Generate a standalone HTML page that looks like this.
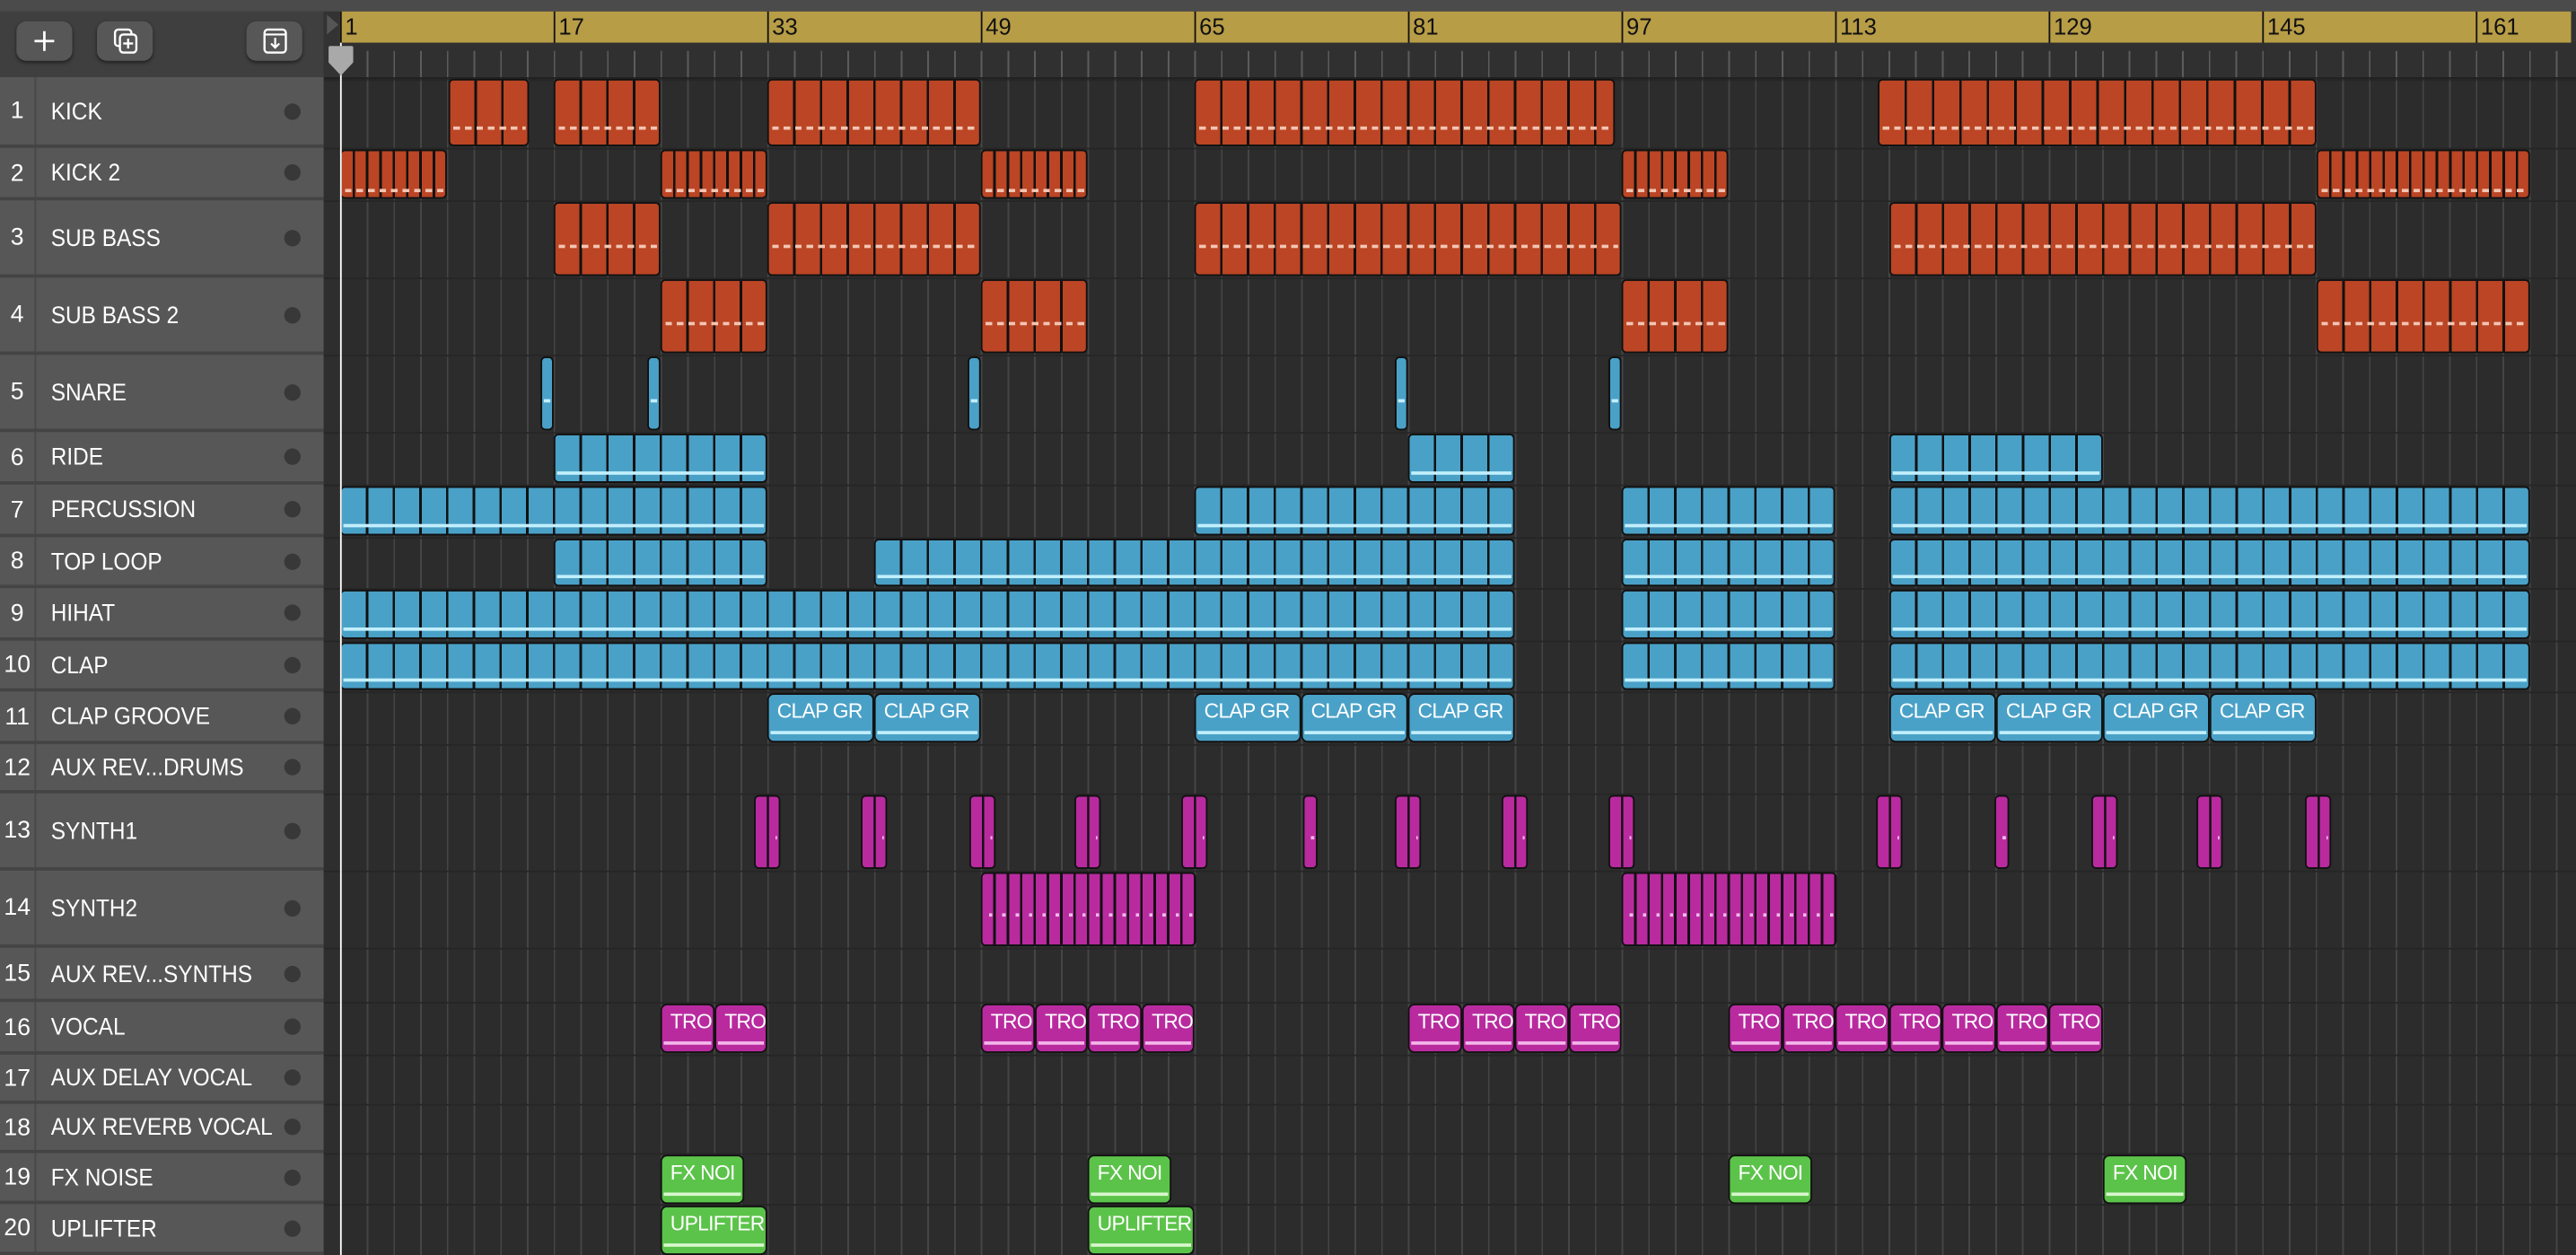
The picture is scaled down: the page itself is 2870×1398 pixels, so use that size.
<!DOCTYPE html>
<html><head><meta charset="utf-8"><style>
html,body{margin:0;padding:0;background:#2c2c2c;overflow:hidden;}
body{width:2870px;height:1398px;}
#w{position:absolute;left:0;top:0;width:1568px;height:764px;transform:scale(1.83036,1.8298);transform-origin:0 0;font-family:"Liberation Sans",sans-serif;background:#2c2c2c;overflow:hidden;}
.a{position:absolute;}
.r{position:absolute;border:1px solid #111;border-radius:3px;box-sizing:border-box;background:repeating-linear-gradient(90deg,var(--c) 0 calc(var(--w) - 1.5px),#111 calc(var(--w) - 1.5px) var(--w));}
.r::after{content:"";position:absolute;left:1px;right:1px;bottom:var(--lb);height:1.6px;background:var(--l);}
.o{--c:#bb4524;--l:repeating-linear-gradient(90deg,transparent 0 1px,#f3c5b3 1px 5px,transparent 5px 7px);}
.b{--c:#4aa1c7;--l:#c2effd;}
.m{--c:#b92a9f;--l:repeating-linear-gradient(90deg,transparent 0 3px,#f4b7ea 3px 5px,transparent 5px 8.125px);}
.mt{--c:#b92a9f;--l:repeating-linear-gradient(90deg,transparent 0 11px,#f4b7ea 11px 13px,transparent 13px 16.25px);}
.lc{position:absolute;box-sizing:border-box;border:1px solid #111;border-radius:4px;color:#fff;font-size:12.5px;letter-spacing:-0.4px;padding:3px 0 0 5px;white-space:nowrap;overflow:hidden;}
.lc::after{content:"";position:absolute;left:1px;right:1px;bottom:4px;height:1.6px;background:var(--l);}
.lb{background:#4aa1c7;--l:#c2effd;}
.lm{background:#b92a9f;--l:#f4b7ea;height:30px;}
.lg{background:#5cc34a;--l:#d9f7cf;}
.tr{position:absolute;left:0;width:197px;background:#575757;box-sizing:border-box;border-bottom:2px solid #444;color:#fff;font-size:14.5px;}
.tr .n{position:absolute;left:0;width:22px;text-align:center;border-right:1px solid #474747;height:100%;display:flex;align-items:center;justify-content:center;box-sizing:border-box;padding-top:1px;}
.tr .t{position:absolute;left:31px;top:50%;transform:translateY(-45%) scaleX(0.92);transform-origin:left center;white-space:nowrap;}
.tr .d{position:absolute;left:173px;top:50%;margin-top:-5px;width:10px;height:10px;border-radius:50%;background:#383838;}
.hl{position:absolute;left:197px;width:1371px;height:1.5px;background:#262626;}
.btn{position:absolute;top:13px;height:24px;width:34px;border-radius:6px;background:#575757;box-shadow:0 1px 2px #222;}
.num{position:absolute;top:7px;height:19px;border-left:1px solid #111;font-size:14px;color:#111;padding-left:2px;line-height:19px;}
</style></head><body><div id="w">
<div class="a" style="left:0;top:0;width:1568px;height:7px;background:#4b4b4b"></div>
<div class="a" style="left:0;top:7px;width:197px;height:40px;background:#3f3f3f"></div>
<div class="btn" style="left:10px"><svg width="34" height="24" viewBox="0 0 34 24"><path d="M17 6v12M11 12h12" stroke="#fff" stroke-width="1.5"/></svg></div>
<div class="btn" style="left:59px"><svg width="34" height="24" viewBox="0 0 34 24"><rect x="11" y="5" width="10" height="10" rx="2" fill="none" stroke="#fff" stroke-width="1.3"/><rect x="14" y="8" width="10" height="11" rx="2" fill="#575757" stroke="#fff" stroke-width="1.3"/><path d="M19 10.5v6M16 13.5h6" stroke="#fff" stroke-width="1.3"/></svg></div>
<div class="btn" style="left:150px"><svg width="34" height="24" viewBox="0 0 34 24"><rect x="11" y="5" width="13" height="14" rx="2" fill="none" stroke="#fff" stroke-width="1.3"/><path d="M11 8h13M17.5 10v6M15 13.5l2.5 2.5 2.5-2.5" stroke="#fff" stroke-width="1.2" fill="none"/></svg></div>
<div class="a" style="left:197px;top:7px;width:10px;height:40px;background:#333"></div>
<svg class="a" style="left:198px;top:8px" width="9" height="14"><path d="M1 1L8 7L1 13Z" fill="#555"/></svg>
<div class="a" style="left:207px;top:7px;width:1358px;height:19px;background:#b89d47"></div>
<div class="a" style="left:207px;top:26px;width:1361px;height:21px;background:#303030"></div>
<div class="a" style="left:207px;top:31px;width:1361px;height:16px;background:repeating-linear-gradient(90deg,#5c5c5c 0 1px,transparent 1px 16.25px)"></div>
<div class="num" style="left:207px">1</div>
<div class="num" style="left:337px">17</div>
<div class="num" style="left:467px">33</div>
<div class="num" style="left:597px">49</div>
<div class="num" style="left:727px">65</div>
<div class="num" style="left:857px">81</div>
<div class="num" style="left:987px">97</div>
<div class="num" style="left:1117px">113</div>
<div class="num" style="left:1247px">129</div>
<div class="num" style="left:1377px">145</div>
<div class="num" style="left:1507px">161</div>
<div class="a" style="left:1565px;top:7px;width:3px;height:19px;background:#333"></div>
<div class="a" style="left:197px;top:47px;width:10px;height:717px;background:#2e2e2e"></div>
<div class="a" style="left:207px;top:47px;width:1361px;height:717px;background:repeating-linear-gradient(90deg,#454545 0 1px,transparent 1px 16.25px) #2c2c2c"></div>
<div class="a" style="left:197px;top:47px;width:1371px;height:3px;background:linear-gradient(#1f1f1f,transparent)"></div>
<div class="hl" style="top:89.5px"></div><div class="hl" style="top:121.5px"></div><div class="hl" style="top:168.5px"></div><div class="hl" style="top:215.5px"></div><div class="hl" style="top:262.5px"></div><div class="hl" style="top:294.5px"></div><div class="hl" style="top:326.5px"></div><div class="hl" style="top:357.5px"></div><div class="hl" style="top:389.5px"></div><div class="hl" style="top:420.5px"></div><div class="hl" style="top:452.5px"></div><div class="hl" style="top:482.5px"></div><div class="hl" style="top:529.5px"></div><div class="hl" style="top:576.5px"></div><div class="hl" style="top:609.5px"></div><div class="hl" style="top:641.5px"></div><div class="hl" style="top:671.5px"></div><div class="hl" style="top:701.5px"></div><div class="hl" style="top:732.5px"></div>

<div class="tr" style="top:47px;height:43px"><div class="n">1</div><div class="t">KICK</div><div class="d"></div></div>
<div class="tr" style="top:90px;height:32px"><div class="n">2</div><div class="t">KICK 2</div><div class="d"></div></div>
<div class="tr" style="top:122px;height:47px"><div class="n">3</div><div class="t">SUB BASS</div><div class="d"></div></div>
<div class="tr" style="top:169px;height:47px"><div class="n">4</div><div class="t">SUB BASS 2</div><div class="d"></div></div>
<div class="tr" style="top:216px;height:47px"><div class="n">5</div><div class="t">SNARE</div><div class="d"></div></div>
<div class="tr" style="top:263px;height:32px"><div class="n">6</div><div class="t">RIDE</div><div class="d"></div></div>
<div class="tr" style="top:295px;height:32px"><div class="n">7</div><div class="t">PERCUSSION</div><div class="d"></div></div>
<div class="tr" style="top:327px;height:31px"><div class="n">8</div><div class="t">TOP LOOP</div><div class="d"></div></div>
<div class="tr" style="top:358px;height:32px"><div class="n">9</div><div class="t">HIHAT</div><div class="d"></div></div>
<div class="tr" style="top:390px;height:31px"><div class="n">10</div><div class="t">CLAP</div><div class="d"></div></div>
<div class="tr" style="top:421px;height:32px"><div class="n">11</div><div class="t">CLAP GROOVE</div><div class="d"></div></div>
<div class="tr" style="top:453px;height:30px"><div class="n">12</div><div class="t">AUX REV...DRUMS</div><div class="d"></div></div>
<div class="tr" style="top:483px;height:47px"><div class="n">13</div><div class="t">SYNTH1</div><div class="d"></div></div>
<div class="tr" style="top:530px;height:47px"><div class="n">14</div><div class="t">SYNTH2</div><div class="d"></div></div>
<div class="tr" style="top:577px;height:33px"><div class="n">15</div><div class="t">AUX REV...SYNTHS</div><div class="d"></div></div>
<div class="tr" style="top:610px;height:32px"><div class="n">16</div><div class="t">VOCAL</div><div class="d"></div></div>
<div class="tr" style="top:642px;height:30px"><div class="n">17</div><div class="t">AUX DELAY VOCAL</div><div class="d"></div></div>
<div class="tr" style="top:672px;height:30px"><div class="n">18</div><div class="t">AUX REVERB VOCAL</div><div class="d"></div></div>
<div class="tr" style="top:702px;height:31px"><div class="n">19</div><div class="t">FX NOISE</div><div class="d"></div></div>
<div class="tr" style="top:733px;height:31px"><div class="n">20</div><div class="t">UPLIFTER</div><div class="d"></div></div>

<div class="r o" style="left:273px;top:48px;width:49px;height:41px;--w:16.25px;--lb:9px"></div>
<div class="r o" style="left:337px;top:48px;width:65px;height:41px;--w:16.25px;--lb:9px"></div>
<div class="r o" style="left:467px;top:48px;width:130px;height:41px;--w:16.25px;--lb:9px"></div>
<div class="r o" style="left:727px;top:48px;width:256px;height:41px;--w:16.25px;--lb:9px"></div>
<div class="r o" style="left:1143px;top:48px;width:267px;height:41px;--w:16.7px;--lb:9px"></div>
<div class="r o" style="left:207px;top:91px;width:65px;height:30px;--w:8.125px;--lb:3px"></div>
<div class="r o" style="left:402px;top:91px;width:65px;height:30px;--w:8.125px;--lb:3px"></div>
<div class="r o" style="left:597px;top:91px;width:65px;height:30px;--w:8.125px;--lb:3px"></div>
<div class="r o" style="left:987px;top:91px;width:65px;height:30px;--w:8.125px;--lb:3px"></div>
<div class="r o" style="left:1410px;top:91px;width:130px;height:30px;--w:8.125px;--lb:3px"></div>
<div class="r o" style="left:337px;top:123px;width:65px;height:45px;--w:16.25px;--lb:16px"></div>
<div class="r o" style="left:467px;top:123px;width:130px;height:45px;--w:16.25px;--lb:16px"></div>
<div class="r o" style="left:727px;top:123px;width:260px;height:45px;--w:16.25px;--lb:16px"></div>
<div class="r o" style="left:1150px;top:123px;width:260px;height:45px;--w:16.25px;--lb:16px"></div>
<div class="r o" style="left:402px;top:170px;width:65px;height:45px;--w:16.25px;--lb:16px"></div>
<div class="r o" style="left:597px;top:170px;width:65px;height:45px;--w:16.25px;--lb:16px"></div>
<div class="r o" style="left:987px;top:170px;width:65px;height:45px;--w:16.25px;--lb:16px"></div>
<div class="r o" style="left:1410px;top:170px;width:130px;height:45px;--w:16.25px;--lb:16px"></div>
<div class="r b" style="left:329px;top:217px;width:8px;height:45px;--w:8px;--lb:16px"></div>
<div class="r b" style="left:394px;top:217px;width:8px;height:45px;--w:8px;--lb:16px"></div>
<div class="r b" style="left:589px;top:217px;width:8px;height:45px;--w:8px;--lb:16px"></div>
<div class="r b" style="left:849px;top:217px;width:8px;height:45px;--w:8px;--lb:16px"></div>
<div class="r b" style="left:979px;top:217px;width:8px;height:45px;--w:8px;--lb:16px"></div>
<div class="r b" style="left:337px;top:264px;width:130px;height:30px;--w:16.25px;--lb:4px"></div>
<div class="r b" style="left:857px;top:264px;width:65px;height:30px;--w:16.25px;--lb:4px"></div>
<div class="r b" style="left:1150px;top:264px;width:130px;height:30px;--w:16.25px;--lb:4px"></div>
<div class="r b" style="left:207px;top:296px;width:260px;height:30px;--w:16.25px;--lb:4px"></div>
<div class="r b" style="left:727px;top:296px;width:195px;height:30px;--w:16.25px;--lb:4px"></div>
<div class="r b" style="left:987px;top:296px;width:130px;height:30px;--w:16.25px;--lb:4px"></div>
<div class="r b" style="left:1150px;top:296px;width:390px;height:30px;--w:16.25px;--lb:4px"></div>
<div class="r b" style="left:337px;top:328px;width:130px;height:29px;--w:16.25px;--lb:4px"></div>
<div class="r b" style="left:532px;top:328px;width:390px;height:29px;--w:16.25px;--lb:4px"></div>
<div class="r b" style="left:987px;top:328px;width:130px;height:29px;--w:16.25px;--lb:4px"></div>
<div class="r b" style="left:1150px;top:328px;width:390px;height:29px;--w:16.25px;--lb:4px"></div>
<div class="r b" style="left:207px;top:359px;width:715px;height:30px;--w:16.25px;--lb:4px"></div>
<div class="r b" style="left:987px;top:359px;width:130px;height:30px;--w:16.25px;--lb:4px"></div>
<div class="r b" style="left:1150px;top:359px;width:390px;height:30px;--w:16.25px;--lb:4px"></div>
<div class="r b" style="left:207px;top:391px;width:715px;height:29px;--w:16.25px;--lb:4px"></div>
<div class="r b" style="left:987px;top:391px;width:130px;height:29px;--w:16.25px;--lb:4px"></div>
<div class="r b" style="left:1150px;top:391px;width:390px;height:29px;--w:16.25px;--lb:4px"></div>
<div class="lc lb" style="left:467px;top:422px;width:65px;height:30px">CLAP GR</div>
<div class="lc lb" style="left:532px;top:422px;width:65px;height:30px">CLAP GR</div>
<div class="lc lb" style="left:727px;top:422px;width:65px;height:30px">CLAP GR</div>
<div class="lc lb" style="left:792px;top:422px;width:65px;height:30px">CLAP GR</div>
<div class="lc lb" style="left:857px;top:422px;width:65px;height:30px">CLAP GR</div>
<div class="lc lb" style="left:1150px;top:422px;width:65px;height:30px">CLAP GR</div>
<div class="lc lb" style="left:1215px;top:422px;width:65px;height:30px">CLAP GR</div>
<div class="lc lb" style="left:1280px;top:422px;width:65px;height:30px">CLAP GR</div>
<div class="lc lb" style="left:1345px;top:422px;width:65px;height:30px">CLAP GR</div>
<div class="r mt" style="left:459px;top:484px;width:16.25px;height:45px;--w:8.125px;--lb:17px"></div>
<div class="r mt" style="left:524px;top:484px;width:16.25px;height:45px;--w:8.125px;--lb:17px"></div>
<div class="r mt" style="left:590px;top:484px;width:16.25px;height:45px;--w:8.125px;--lb:17px"></div>
<div class="r mt" style="left:654px;top:484px;width:16.25px;height:45px;--w:8.125px;--lb:17px"></div>
<div class="r mt" style="left:719px;top:484px;width:16.25px;height:45px;--w:8.125px;--lb:17px"></div>
<div class="r m" style="left:793px;top:484px;width:8.5px;height:45px;--w:9px;--lb:17px"></div>
<div class="r mt" style="left:849px;top:484px;width:16.25px;height:45px;--w:8.125px;--lb:17px"></div>
<div class="r mt" style="left:914px;top:484px;width:16.25px;height:45px;--w:8.125px;--lb:17px"></div>
<div class="r mt" style="left:979px;top:484px;width:16.25px;height:45px;--w:8.125px;--lb:17px"></div>
<div class="r mt" style="left:1142px;top:484px;width:16.25px;height:45px;--w:8.125px;--lb:17px"></div>
<div class="r m" style="left:1214px;top:484px;width:8.5px;height:45px;--w:9px;--lb:17px"></div>
<div class="r mt" style="left:1273px;top:484px;width:16.25px;height:45px;--w:8.125px;--lb:17px"></div>
<div class="r mt" style="left:1337px;top:484px;width:16.25px;height:45px;--w:8.125px;--lb:17px"></div>
<div class="r mt" style="left:1403px;top:484px;width:16.25px;height:45px;--w:8.125px;--lb:17px"></div>
<div class="r m" style="left:597px;top:531px;width:131px;height:45px;--w:8.125px;--lb:17px"></div>
<div class="r m" style="left:987px;top:531px;width:131px;height:45px;--w:8.125px;--lb:17px"></div>
<div class="lc lm" style="left:402px;top:611px;width:33px">TRO</div>
<div class="lc lm" style="left:435px;top:611px;width:32px">TRO</div>
<div class="lc lm" style="left:597px;top:611px;width:33px">TRO</div>
<div class="lc lm" style="left:630px;top:611px;width:32px">TRO</div>
<div class="lc lm" style="left:662px;top:611px;width:33px">TRO</div>
<div class="lc lm" style="left:695px;top:611px;width:32px">TRO</div>
<div class="lc lm" style="left:857px;top:611px;width:33px">TRO</div>
<div class="lc lm" style="left:890px;top:611px;width:32px">TRO</div>
<div class="lc lm" style="left:922px;top:611px;width:33px">TRO</div>
<div class="lc lm" style="left:955px;top:611px;width:32px">TRO</div>
<div class="lc lm" style="left:1052px;top:611px;width:33px">TRO</div>
<div class="lc lm" style="left:1085px;top:611px;width:32px">TRO</div>
<div class="lc lm" style="left:1117px;top:611px;width:33px">TRO</div>
<div class="lc lm" style="left:1150px;top:611px;width:32px">TRO</div>
<div class="lc lm" style="left:1182px;top:611px;width:33px">TRO</div>
<div class="lc lm" style="left:1215px;top:611px;width:32px">TRO</div>
<div class="lc lm" style="left:1247px;top:611px;width:33px">TRO</div>
<div class="lc lg" style="left:402px;top:703px;width:51px;height:30px">FX NOI</div>
<div class="lc lg" style="left:662px;top:703px;width:51px;height:30px">FX NOI</div>
<div class="lc lg" style="left:1052px;top:703px;width:51px;height:30px">FX NOI</div>
<div class="lc lg" style="left:1280px;top:703px;width:51px;height:30px">FX NOI</div>
<div class="lc lg" style="left:402px;top:734px;width:65px;height:30px">UPLIFTER</div>
<div class="lc lg" style="left:662px;top:734px;width:65px;height:30px">UPLIFTER</div>

<div class="a" style="left:206.5px;top:26px;width:1.2px;height:738px;background:#fff"></div>
<svg class="a" style="left:199px;top:27px" width="17" height="20"><path d="M1 2Q1 1 2 1H15Q16 1 16 2V11L8.5 19L1 11Z" fill="#a9a9a9"/></svg>
</div></body></html>
